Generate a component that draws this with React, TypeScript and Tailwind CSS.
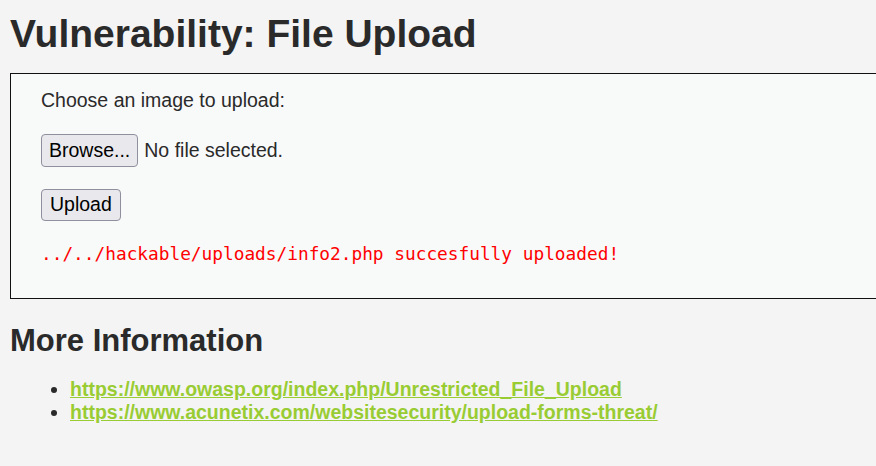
import { useState } from "react";

const links = [
	"https://www.owasp.org/index.php/Unrestricted_File_Upload",
	"https://www.acunetix.com/websitesecurity/upload-forms-threat/",
];

const App = () => {
	const [fileName] = useState<string | null>(null);

	return (
		<div className="min-h-screen w-full overflow-hidden bg-[#f4f4f4] px-[10px] pt-[11px] pb-10 text-[#2a2a2a] font-['Liberation_Sans',Arial,sans-serif]">
			<h1 className="text-[39px] leading-[45px] font-bold">Vulnerability: File Upload</h1>

			{/* Upload form */}
			<div className="mt-[17px] w-[900px] border border-[#111] bg-[#f8f9f9] pl-[30px] pt-[15px] pb-[34px]">
				<p className="text-[19.5px] leading-[22px]">Choose an image to upload:</p>

				<div className="mt-[23px] flex items-center gap-[6px]">
					<button className="h-[33px] px-[7px] rounded-[4px] border border-[#8f8f9d] bg-[#e9e9ed] text-[19.5px] text-black">
						Browse...
					</button>
					<span className="text-[19.5px]">{fileName ?? "No file selected."}</span>
				</div>

				<button className="mt-[22px] h-[32px] px-[8px] rounded-[4px] border border-[#8f8f9d] bg-[#e9e9ed] text-[19.5px] text-black">
					Upload
				</button>

				<pre className="mt-[22px] text-[17.8px] leading-[21px] text-[#ff0000] font-['DejaVu_Sans_Mono',monospace]">
					../../hackable/uploads/info2.php succesfully uploaded!
				</pre>
			</div>

			{/* More information */}
			<h2 className="mt-[25px] text-[31px] leading-[34px] font-bold">More Information</h2>
			<ul className="mt-[20px] list-disc pl-[60px]">
				{links.map((href) => (
					<li key={href} className="text-[19.5px] leading-[23px]">
						<a href={href} className="font-bold text-[#99cc33] underline">
							{href}
						</a>
					</li>
				))}
			</ul>
		</div>
	);
};

export default App;
